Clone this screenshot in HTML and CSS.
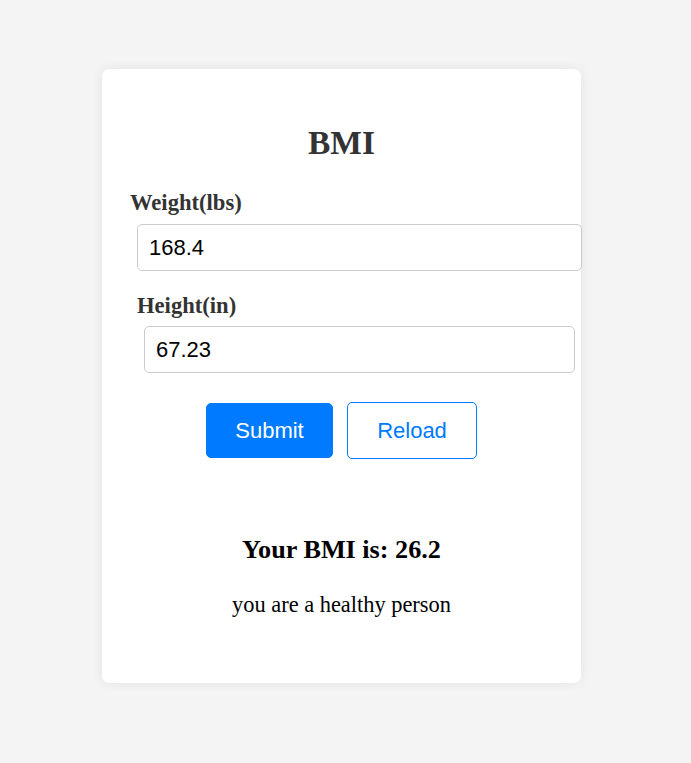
FILE: index.html
```html
<!DOCTYPE html>
<html lang="en">
<head>
<meta charset="utf-8">
<title>BMI</title>
<link rel="stylesheet" href="styles.css">
</head>
<body>
<div class="card">
  <h1 class="title">BMI</h1>
  <form class="form">
    <div class="group group-1">
      <label class="label" for="w">Weight(lbs)</label>
      <input class="field field-1" id="w" type="text" value="168.4">
    </div>
    <div class="group group-2">
      <label class="label" for="h">Height(in)</label>
      <input class="field field-2" id="h" type="text" value="67.23">
    </div>
    <div class="actions">
      <button type="button" class="btn btn-primary">Submit</button>
      <button type="button" class="btn btn-outline">Reload</button>
    </div>
  </form>
  <div class="result">
    <h3 class="result-value">Your BMI is: 26.2</h3>
    <p class="result-msg">you are a healthy person</p>
  </div>
</div>
</body>
</html>
```
FILE: styles.css
```css
html, body {
  margin: 0;
  padding: 0;
}
body {
  background: #f4f4f4;
  font-family: "Liberation Serif", "Times New Roman", serif;
  min-height: 763px;
}
.card {
  box-sizing: border-box;
  width: 479px;
  height: 614px;
  margin: 69px 0 0 102px;
  padding: 55px 28px 0 28px;
  background: #fff;
  border-radius: 7px;
  box-shadow: 0 0 12px rgba(0, 0, 0, 0.08);
}
.title {
  margin: 0;
  text-align: center;
  font-size: 33.5px;
  font-weight: bold;
  color: #333;
  line-height: 38px;
}
.form {
  display: flex;
  flex-direction: column;
  margin-top: 28px;
}
.group {
  display: flex;
  flex-direction: column;
  align-items: flex-start;
}
.label {
  font-size: 22.6px;
  font-weight: bold;
  color: #333;
  line-height: 25px;
}
.group-2 {
  margin-top: 22px;
  padding-left: 7px;
}
.field {
  box-sizing: border-box;
  height: 47px;
  margin-top: 9px;
  margin-left: 7px;
  padding: 10px 11px;
  border: 1px solid #ccc;
  border-radius: 5px;
  font-family: "Liberation Sans", Arial, sans-serif;
  font-size: 22px;
  color: #000;
  background: #fff;
  outline: none;
}
.field-1 {
  width: 445px;
}
.field-2 {
  width: 431px;
  margin-top: 8px;
}
.actions {
  display: flex;
  justify-content: center;
  align-items: center;
  gap: 14px;
  margin-top: 29px;
}
.btn {
  box-sizing: border-box;
  padding: 0 28px;
  border-radius: 5px;
  border: 1px solid #007bff;
  font-family: "Liberation Sans", Arial, sans-serif;
  font-size: 22px;
  cursor: pointer;
}
.btn-primary {
  width: 127px;
  height: 55px;
  background: #007bff;
  color: #fff;
}
.btn-outline {
  width: 130px;
  height: 57px;
  background: #fff;
  color: #007bff;
}
.result {
  margin-top: 76px;
  text-align: center;
}
.result-value {
  margin: 0;
  font-size: 26.2px;
  font-weight: bold;
  color: #000;
  line-height: 29px;
}
.result-msg {
  margin: 28px 0 0 0;
  font-size: 22.4px;
  color: #000;
  line-height: 25px;
}
```
